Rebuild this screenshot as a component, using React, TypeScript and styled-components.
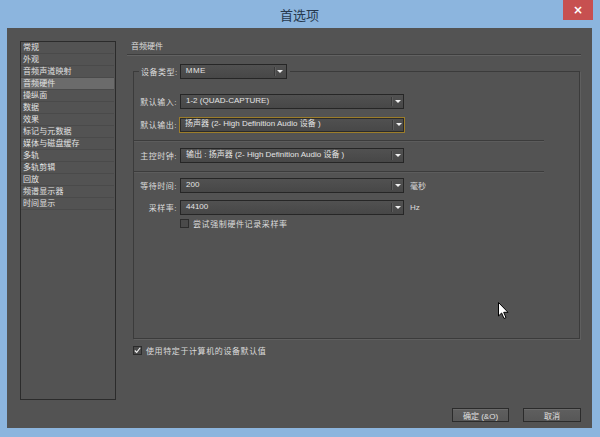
import React from "react";
import styled, { createGlobalStyle } from "styled-components";

const GlobalStyle = createGlobalStyle`
  html, body {
    margin: 0;
    padding: 0;
    background: #8cb5de;
  }
  * {
    box-sizing: border-box;
  }
`;

const Window = styled.div`
  position: relative;
  width: 600px;
  height: 437px;
  background: #8cb5de;
  display: flex;
  flex-direction: column;
  padding: 0 8px 9px 7px;
  font-family: "Liberation Sans", "Noto Sans CJK SC", sans-serif;
  font-size: 8px;
  color: #dcdcdc;
`;

const TitleBar = styled.div`
  position: relative;
  height: 28px;
  display: flex;
  align-items: center;
  justify-content: center;
`;

const Title = styled.span`
  font-family: "Noto Sans CJK SC", sans-serif;
  font-size: 13px;
  color: #26384d;
  margin-top: 1px;
`;

const CloseBtn = styled.div`
  position: absolute;
  top: 0;
  right: -1px;
  width: 30px;
  height: 20px;
  background: #c75050;
  color: #fff;
  font-family: "DejaVu Sans", sans-serif;
  font-size: 12px;
  font-weight: bold;
  display: flex;
  align-items: center;
  justify-content: center;
`;

const Body = styled.div`
  flex: 1;
  background: #535353;
  display: flex;
  padding: 13px 11px 6px 13px;
`;

const NavList = styled.ul`
  list-style: none;
  margin: 0;
  padding: 0;
  width: 96px;
  height: 359px;
  border: 1px solid #2b2b2b;
  flex: none;
`;

const NavItem = styled.li<{ $active?: boolean }>`
  height: 12px;
  line-height: 11px;
  padding-left: 2px;
  margin-right: 1px;
  border-bottom: 1px solid #4a4a4a;
  background: ${(p) => (p.$active ? "#6b6b6b" : "transparent")};
  color: #e2e2e2;
  letter-spacing: 0.1px;
  white-space: nowrap;
`;

const Right = styled.div`
  flex: 1;
  margin-left: 11px;
  display: flex;
  flex-direction: column;
`;

const Header = styled.div`
  height: 14px;
  line-height: 12px;
  padding-left: 4px;
  border-bottom: 1px solid #3d3d3d;
  box-shadow: 0 1px 0 #626262;
`;

const Group = styled.fieldset`
  margin: 9px 1px 0 6px;
  padding: 15px 0 110px 0;
  border: 1px solid #3b3b3b;
  box-shadow: 1px 1px 0 #5f5f5f;
  min-width: 0;
`;

const Legend = styled.legend`
  display: flex;
  align-items: center;
  margin-left: 5px;
  padding: 0 3px 0 2px;
  gap: 2px;
  letter-spacing: 0.5px;
`;

const Row = styled.div<{ $top?: number }>`
  display: flex;
  align-items: center;
  height: 15px;
  margin-top: ${(p) => p.$top ?? 0}px;
`;

const Label = styled.span`
  width: 43px;
  margin-right: 3px;
  text-align: right;
  letter-spacing: 0.5px;
  white-space: nowrap;
`;

const Unit = styled.span`
  margin-left: 6px;
`;

const Separator = styled.div<{ $top: number }>`
  width: 410px;
  margin-top: ${(p) => p.$top}px;
  border-top: 1px solid #3c3c3c;
  border-bottom: 1px solid #5c5c5c;
`;

const SelectBox = styled.div<{ $width: number; $focus?: boolean }>`
  width: ${(p) => p.$width}px;
  height: ${(p) => (p.$focus ? 16 : 15)}px;
  margin-left: ${(p) => (p.$focus ? -1 : 0)}px;
  display: flex;
  align-items: stretch;
  border: 1px solid ${(p) => (p.$focus ? "#9c7d2a" : "#262626")};
  box-shadow: ${(p) => (p.$focus ? "inset 0 0 0 1px #2a2a2a" : "none")};
  background: linear-gradient(#515151, #474747);
  flex: none;
`;

const SelectValue = styled.span`
  flex: 1;
  padding-left: 5px;
  line-height: 12px;
  color: #e4e4e4;
  white-space: nowrap;
  overflow: hidden;
`;

const ArrowCell = styled.span`
  width: 12px;
  display: flex;
  align-items: center;
  justify-content: center;
  border-left: 1px solid #3a3a3a;
  box-shadow: inset 1px 0 0 #5c5c5c;
  margin: 2px 0;
`;

const Arrow = styled.span`
  width: 0;
  height: 0;
  border-left: 3px solid transparent;
  border-right: 3px solid transparent;
  border-top: 3px solid #f0f0f0;
`;

const CheckRow = styled.label<{ $top: number; $indent?: number }>`
  display: flex;
  align-items: center;
  height: 10px;
  margin-top: ${(p) => p.$top}px;
  margin-left: ${(p) => p.$indent ?? 0}px;
  gap: 4px;
  letter-spacing: 0.6px;
`;

const Box = styled.span`
  width: 9px;
  height: 9px;
  border: 1px solid #2c2c2c;
  background: #4a4a4a;
  display: flex;
  align-items: center;
  justify-content: center;
`;

const Buttons = styled.div`
  margin-top: auto;
  display: flex;
  justify-content: flex-end;
  gap: 14px;
`;

const Button = styled.div<{ $width: number }>`
  width: ${(p) => p.$width}px;
  height: 14px;
  border: 1px solid #2b2b2b;
  background: linear-gradient(#5f5f5f, #575757);
  box-shadow: inset 0 1px 0 #6a6a6a;
  display: flex;
  align-items: center;
  justify-content: center;
  color: #e0e0e0;
`;

const Cursor = styled.svg`
  position: absolute;
  left: 498px;
  top: 302px;
`;

const Select: React.FC<{ value: string; width: number; focus?: boolean }> = ({
  value,
  width,
  focus,
}) => (
  <SelectBox $width={width} $focus={focus}>
    <SelectValue>{value}</SelectValue>
    <ArrowCell>
      <Arrow />
    </ArrowCell>
  </SelectBox>
);

const navItems = [
  "常规",
  "外观",
  "音频声道映射",
  "音频硬件",
  "操纵面",
  "数据",
  "效果",
  "标记与元数据",
  "媒体与磁盘缓存",
  "多轨",
  "多轨剪辑",
  "回放",
  "频谱显示器",
  "时间显示",
];

export default function App() {
  return (
    <>
      <GlobalStyle />
      <Window>
        <TitleBar>
          <Title>首选项</Title>
          <CloseBtn>×</CloseBtn>
        </TitleBar>
        <Body>
          <NavList>
            {navItems.map((item) => (
              <NavItem key={item} $active={item === "音频硬件"}>
                {item}
              </NavItem>
            ))}
          </NavList>
          <Right>
            <Header>音频硬件</Header>
            <Group>
              <Legend>
                设备类型:
                <Select value="MME" width={107} />
              </Legend>
              <Row>
                <Label>默认输入:</Label>
                <Select value="1-2 (QUAD-CAPTURE)" width={224} />
              </Row>
              <Row $top={8}>
                <Label>默认输出:</Label>
                <Select
                  value="扬声器 (2- High Definition Audio 设备 )"
                  width={226}
                  focus
                />
              </Row>
              <Separator $top={8} />
              <Row $top={6}>
                <Label>主控时钟:</Label>
                <Select
                  value="输出 : 扬声器 (2- High Definition Audio 设备 )"
                  width={224}
                />
              </Row>
              <Separator $top={8} />
              <Row $top={5}>
                <Label>等待时间:</Label>
                <Select value="200" width={224} />
                <Unit>毫秒</Unit>
              </Row>
              <Row $top={7}>
                <Label>采样率:</Label>
                <Select value="44100" width={224} />
                <Unit>Hz</Unit>
              </Row>
              <CheckRow $top={3} $indent={46}>
                <Box />
                尝试强制硬件记录采样率
              </CheckRow>
            </Group>
            <CheckRow $top={6} $indent={6}>
              <Box>
                <svg width="9" height="9" viewBox="0 0 9 9">
                  <path
                    d="M1 4.5 L3.5 7 L8 1"
                    stroke="#f2f2f2"
                    strokeWidth="1.4"
                    fill="none"
                  />
                </svg>
              </Box>
              使用特定于计算机的设备默认值
            </CheckRow>
            <Buttons>
              <Button $width={57}>确定 (&amp;O)</Button>
              <Button $width={58}>取消</Button>
            </Buttons>
          </Right>
        </Body>
        <Cursor width="12" height="18" viewBox="0 0 12 18">
          <path
            d="M0.5 0.5 L0.5 14 L3.6 11 L6 16.5 L8 15.6 L5.7 10.3 L10 10.3 Z"
            fill="#fff"
            stroke="#000"
            strokeWidth="1"
          />
        </Cursor>
      </Window>
    </>
  );
}
